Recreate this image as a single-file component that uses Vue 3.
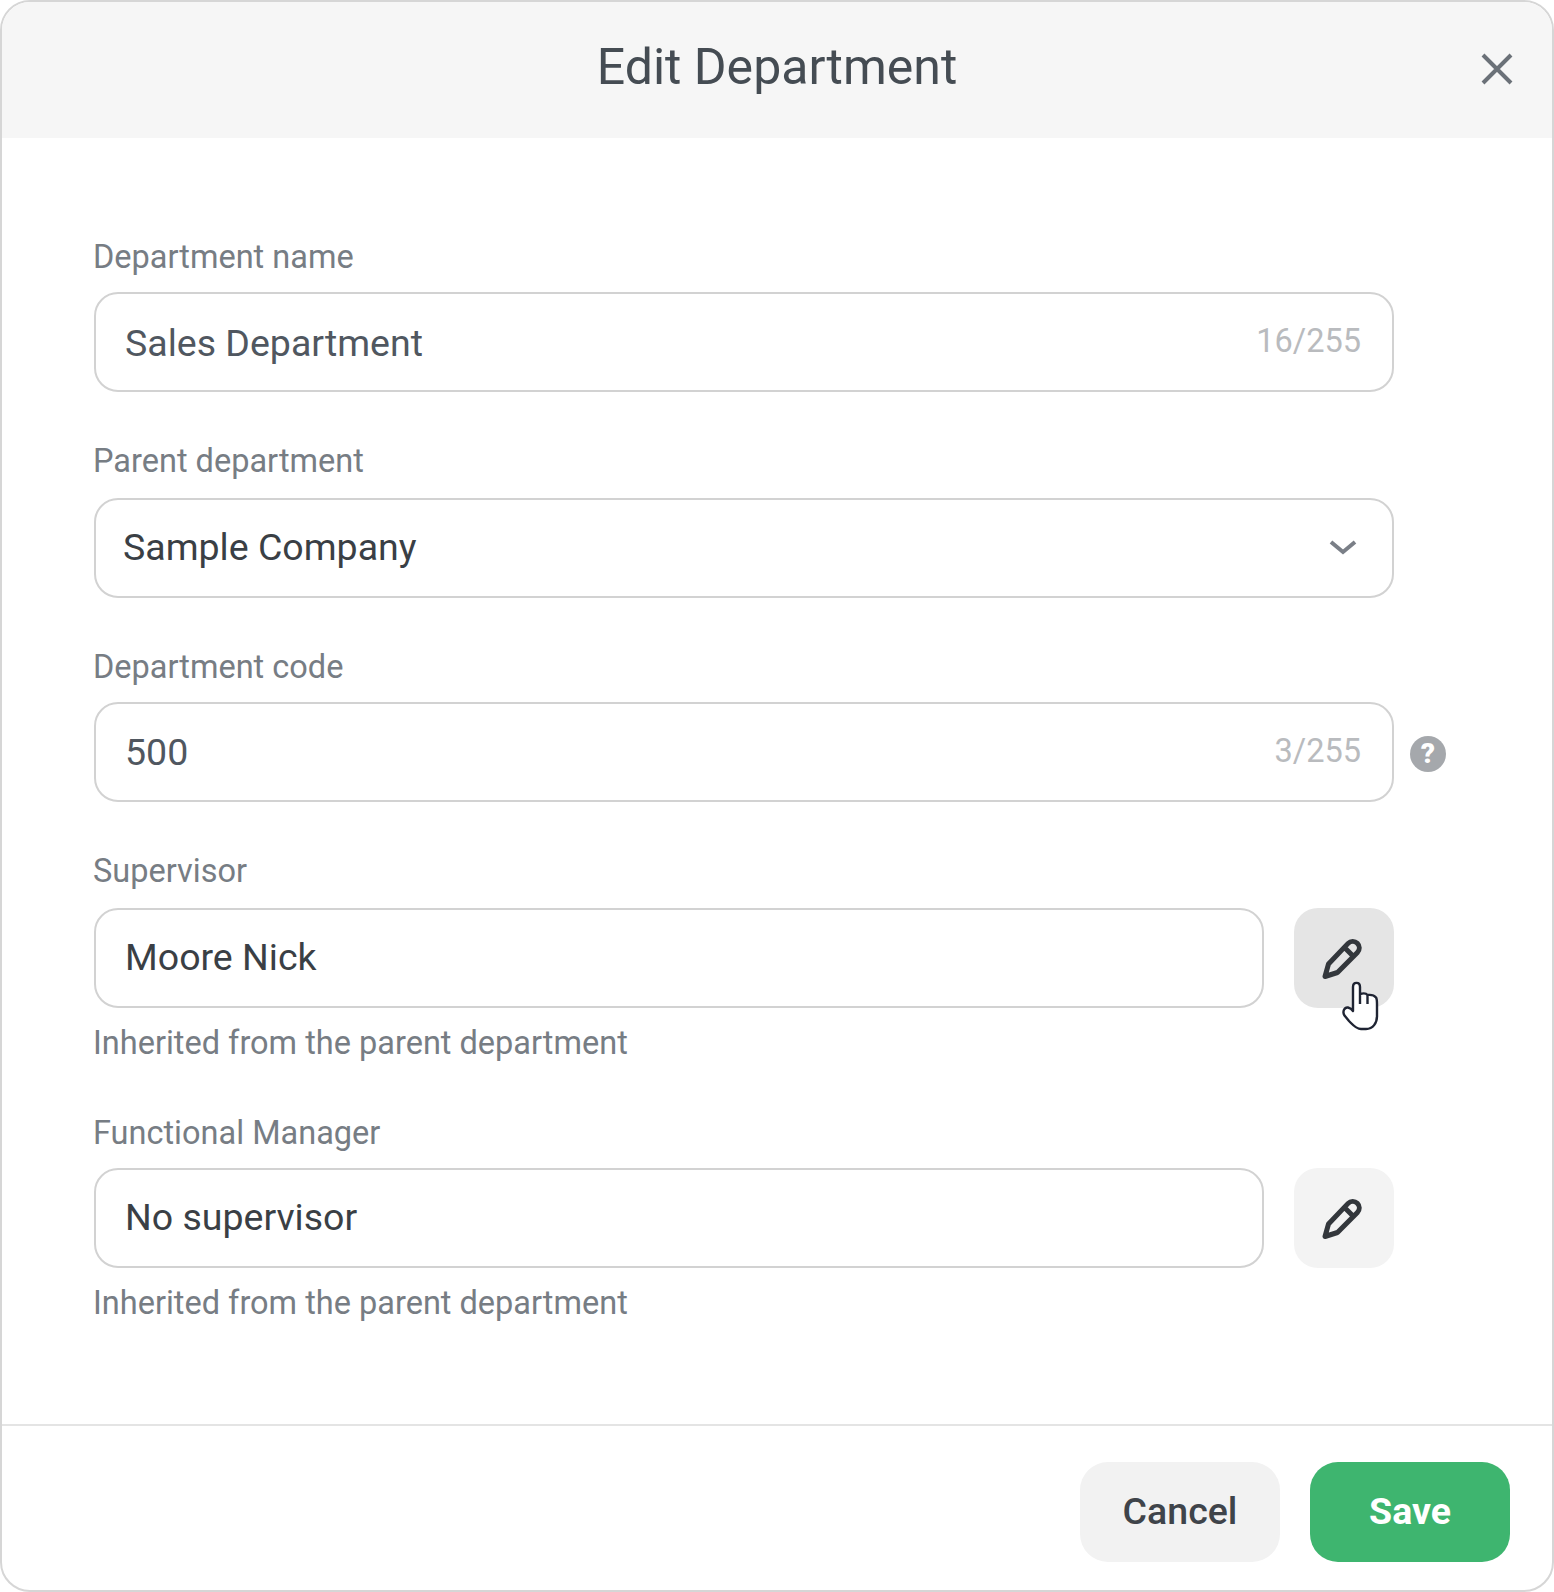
<script setup>
const pencil = 'M4 39.500 L7.500 27 L27.100 6.400 A6.500 6.500 0 0 1 36.400 15.500 L16.500 35.500 Z M23.500 10.500 L32.500 19.500'
</script>

<template>
  <div class="modal">
    <header class="head">
      <h1 class="title">Edit Department</h1>
      <svg class="close" viewBox="0 0 32 32" width="32" height="32" aria-label="Close">
        <path d="M2 2 L30 30 M30 2 L2 30" />
      </svg>
    </header>

    <main class="body">
      <section class="field">
        <label class="label">Department name</label>
        <div class="row">
          <div class="box">
            <span class="value first">Sales Department</span>
            <span class="count">16/255</span>
          </div>
        </div>
      </section>

      <section class="field wide-label">
        <label class="label">Parent department</label>
        <div class="row">
          <div class="box select">
            <span class="value dark">Sample Company</span>
            <svg class="chev" viewBox="0 0 28 16" width="28" height="16"><path d="M2 3 L14 13 L26 3" /></svg>
          </div>
        </div>
      </section>

      <section class="field pull-up">
        <label class="label">Department code</label>
        <div class="row">
          <div class="box">
            <span class="value">500</span>
            <span class="count">3/255</span>
            <span class="help" aria-label="Help">?</span>
          </div>
        </div>
      </section>

      <section class="field wide-label">
        <label class="label">Supervisor</label>
        <div class="row">
          <div class="box">
            <span class="value dark">Moore Nick</span>
          </div>
          <button class="edit hover">
            <svg class="pen" viewBox="0 0 44 44" width="44" height="44"><path :d="pencil" /></svg>
            <svg class="hand" viewBox="0 0 50 60" width="50" height="60">
              <path d="M18 36 V12 C18 6.500 25 6.500 25 12 V19 C28.500 18 31 18 32.500 20 C36 19.500 39 20 41 22.500 C42 24 42 26 42 29 V41 C42 48 38 54 31 54 H26 C21 54 18 50 14 46 L9.500 40.500 C7 36.500 9.500 32 13 32.500 C15 33 17 34.500 18 36 Z M25 19 V29 M32.500 20 V29" />
            </svg>
          </button>
        </div>
        <p class="hint">Inherited from the parent department</p>
      </section>

      <section class="field">
        <label class="label">Functional Manager</label>
        <div class="row">
          <div class="box">
            <span class="value dark">No supervisor</span>
          </div>
          <button class="edit">
            <svg class="pen" viewBox="0 0 44 44" width="44" height="44"><path :d="pencil" /></svg>
          </button>
        </div>
        <p class="hint">Inherited from the parent department</p>
      </section>
    </main>

    <footer class="foot">
      <button class="btn cancel">Cancel</button>
      <button class="btn save">Save</button>
    </footer>
  </div>
</template>

<style>
html, body { margin: 0; background: #fff; }
</style>

<style scoped>
.modal {
  box-sizing: border-box;
  width: 1554px;
  height: 1592px;
  border: 2px solid #d6d6d6;
  border-radius: 30px;
  overflow: hidden;
  display: flex;
  flex-direction: column;
  font-family: Roboto, "Liberation Sans", sans-serif;
  background: #fff;
}
.head {
  position: relative;
  height: 136px;
  flex: none;
  background: #f6f6f6;
  display: flex;
  align-items: center;
  justify-content: center;
}
.title {
  margin: 0;
  font-size: 50px;
  font-weight: 400;
  color: #454c53;
  position: relative;
  top: -3px;
}
.close {
  position: absolute;
  right: 39px;
  top: 51px;
  fill: none;
  stroke: #6b7178;
  stroke-width: 4;
}
.body {
  flex: 1;
  padding: 96px 0 0 92px;
  display: flex;
  flex-direction: column;
  gap: 47px;
}
.label {
  display: block;
  height: 58px;
  line-height: 46px;
  font-size: 32.500px;
  color: #777d84;
  margin-left: -1px;
}
.wide-label { margin-top: -1px; }
.wide-label .label { height: 60px; }
.pull-up { margin-top: -1px; }
.row {
  display: flex;
  gap: 30px;
  width: 1300px;
}
.box {
  position: relative;
  box-sizing: border-box;
  flex: 1;
  height: 100px;
  border: 2px solid #d2d2d2;
  border-radius: 24px;
  padding: 0 31px 0 29px;
  display: flex;
  align-items: center;
  justify-content: space-between;
}
.value {
  font-size: 37.500px;
  color: #505760;
}
.value.first { position: relative; top: 1px; }
.value.dark { color: #3a3f45; position: relative; top: -1px; }
.select { padding-left: 27px; padding-right: 35px; }
.count {
  font-size: 32.500px;
  color: #b9bbbe;
  position: relative;
  top: -1px;
}
.chev {
  fill: none;
  stroke: #7a7f87;
  stroke-width: 4;
  position: relative;
  top: -1px;
}
.help {
  position: absolute;
  left: 1314px;
  top: 32px;
  width: 36px;
  height: 36px;
  border-radius: 50%;
  background: #a5a8ac;
  color: #fff;
  font-size: 28px;
  font-weight: 900;
  line-height: 36px;
  text-align: center;
}
.edit {
  position: relative;
  width: 100px;
  height: 100px;
  flex: none;
  padding: 0;
  border: 0;
  border-radius: 24px;
  background: #f3f3f3;
  display: flex;
  align-items: center;
  justify-content: center;
}
.edit.hover { background: #e5e5e5; }
.pen {
  position: relative;
  left: -1px;
  top: 1px;
}
.pen path {
  fill: none;
  stroke: #33373c;
  stroke-width: 5;
  stroke-linejoin: round;
  stroke-linecap: round;
}
.edit .hand {
  position: absolute;
  left: 41px;
  top: 67px;
}
.hand path {
  fill: #fff;
  stroke: #1f2433;
  stroke-width: 2.400;
  stroke-linejoin: round;
}
.hint {
  margin: 15px 0 0 -1px;
  font-size: 32.500px;
  line-height: 40px;
  color: #777d84;
}
.foot {
  flex: none;
  height: 166px;
  border-top: 2px solid #e4e4e4;
  box-sizing: border-box;
  display: flex;
  justify-content: flex-end;
  align-items: center;
  gap: 30px;
  padding: 8px 42px 0 0;
}
.btn {
  width: 200px;
  height: 100px;
  border: 0;
  border-radius: 28px;
  padding: 0 0 2px;
  font-family: inherit;
  font-size: 37.500px;
}
.cancel { background: #f2f2f2; color: #3f444a; font-weight: 500; }
.save { background: #3eb56f; color: #fff; font-weight: 700; }
</style>
